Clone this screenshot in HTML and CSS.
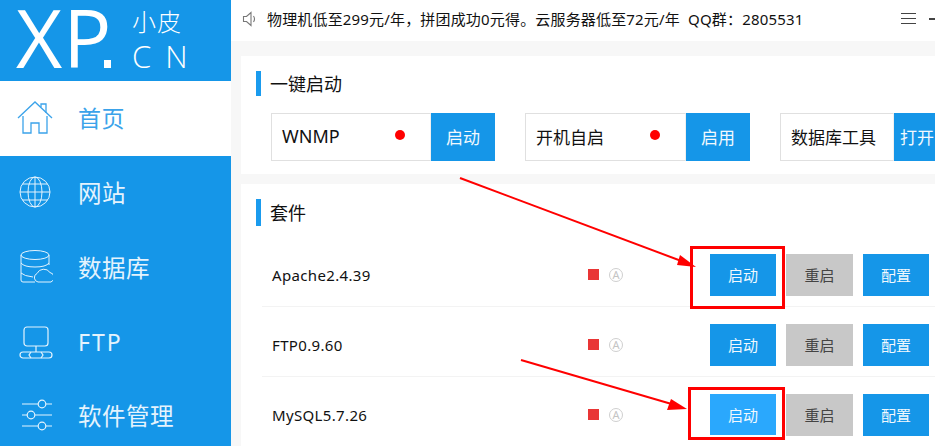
FILE: index.html
```html
<!DOCTYPE html>
<html lang="zh-CN">
<head>
<meta charset="utf-8">
<title>小皮面板</title>
<link rel="stylesheet" href="styles.css">
</head>
<body>
<div class="app">
  <aside class="sidebar">
    <div class="logo">
      <span class="logo-xp">XP</span>
      <span class="logo-dot"></span>
      <span class="logo-side"><span class="logo-cn">小皮</span><span class="logo-en">CN</span></span>
    </div>
    <nav class="nav">
      <a class="nav-item active">
        <svg class="nav-icon" viewBox="0 0 36 36" fill="none" stroke="currentColor" stroke-width="1.3"><path d="M1 19 18 3l17 16"/><path d="M24 8V5h5v9"/><path d="M6 17v17h8V24h8v10h8V17"/></svg>
        <span>首页</span>
      </a>
      <a class="nav-item">
        <svg class="nav-icon" viewBox="0 0 36 36" fill="none" stroke="currentColor" stroke-width="1"><circle cx="18" cy="18" r="15"/><ellipse cx="18" cy="18" rx="7" ry="15"/><path d="M18 3v30M3 18h30M5.500 10h25M5.500 26h25"/></svg>
        <span>网站</span>
      </a>
      <a class="nav-item">
        <svg class="nav-icon" viewBox="0 0 36 36" fill="none" stroke="currentColor" stroke-width="1"><ellipse cx="18" cy="6" rx="14" ry="4.500"/><path d="M4 6v25q0 2 2 2h12M32 6v10M4 14q3 4 14 4t14-4M4 24q3 3 12 4"/><path d="M21 33a4.500 4.500 0 0 1-1-8.500 7.500 7.500 0 0 1 13-1 5 5 0 0 1 1 9.500z"/></svg>
        <span>数据库</span>
      </a>
      <a class="nav-item">
        <svg class="nav-icon" viewBox="0 0 36 36" fill="none" stroke="currentColor" stroke-width="1.2"><rect x="7" y="3" width="24" height="19" rx="3"/><path d="M19 22v6M6 28h26a1.500 1.500 0 0 1 0 6H6a1.500 1.500 0 0 1 0-6z"/><path d="M14 28l-2 3 2 3M24 28l2 3-2 3"/></svg>
        <span class="nav-latin">FTP</span>
      </a>
      <a class="nav-item nav-item-last">
        <svg class="nav-icon" viewBox="0 0 36 36" fill="none" stroke="currentColor" stroke-width="1.2"><path d="M5 7h16M29 7h6M5 18h5M18 18h17M5 29h16M29 29h6"/><circle cx="25" cy="7" r="3.800"/><circle cx="14" cy="18" r="3.800"/><circle cx="25" cy="29" r="3.800"/></svg>
        <span>软件管理</span>
      </a>
    </nav>
  </aside>
  <main class="main">
    <header class="topbar">
      <svg class="speaker" viewBox="0 0 16 16" fill="none" stroke="#777" stroke-width="1.100"><path d="M1.500 5.500h3L9 1.500v13l-4.500-4h-3z"/><path d="M11.500 5q2 3 0 6"/></svg>
      <span class="notice">物理机低至299元/年，拼团成功0元得。云服务器低至72元/年&nbsp;&nbsp;QQ群：2805531</span>
      <span class="menu-icon"></span>
      <span class="min-icon"></span>
    </header>
    <section class="card card-quick">
      <h2 class="title">一键启动</h2>
      <div class="quick">
        <div class="quick-group">
          <div class="quick-box quick-box-a"><span class="quick-label quick-latin">WNMP</span><span class="dot"></span></div>
          <button class="quick-btn">启动</button>
        </div>
        <div class="quick-group">
          <div class="quick-box quick-box-c"><span class="quick-label">开机自启</span><span class="dot"></span></div>
          <button class="quick-btn">启用</button>
        </div>
        <div class="quick-group">
          <div class="quick-box quick-box-b"><span class="quick-label">数据库工具</span></div>
          <button class="quick-btn quick-btn-clipped">打开</button>
        </div>
      </div>
    </section>
    <section class="card card-suite">
      <h2 class="title title-suite">套件</h2>
      <div class="row">
        <span class="row-name">Apache2.4.39</span>
        <span class="stop"></span><span class="auto">A</span>
        <div class="actions"><button class="btn">启动</button><button class="btn btn-gray">重启</button><button class="btn">配置</button></div>
      </div>
      <div class="row">
        <span class="row-name">FTP0.9.60</span>
        <span class="stop"></span><span class="auto">A</span>
        <div class="actions"><button class="btn">启动</button><button class="btn btn-gray">重启</button><button class="btn">配置</button></div>
      </div>
      <div class="row">
        <span class="row-name">MySQL5.7.26</span>
        <span class="stop"></span><span class="auto">A</span>
        <div class="actions"><button class="btn btn-hover">启动</button><button class="btn btn-gray">重启</button><button class="btn">配置</button></div>
      </div>
    </section>
  </main>
  <svg class="marks" viewBox="0 0 935 446" fill="none">
    <path d="M460 178 684 262" stroke="#f00" stroke-width="2"/>
    <path d="M696 267 680 255 677 265z" fill="#f00"/>
    <rect x="691.500" y="247.500" width="92" height="60" stroke="#f00" stroke-width="3"/>
    <path d="M521 360 675 405" stroke="#f00" stroke-width="2"/>
    <path d="M687 409 671 399 667 410z" fill="#f00"/>
    <rect x="689.500" y="388.500" width="94" height="50" stroke="#f00" stroke-width="3"/>
  </svg>
</div>
</body>
</html>
```
FILE: styles.css
```css
* { box-sizing: border-box; }
html, body { margin: 0; height: 100%; overflow: hidden; }
body { font-family: "Noto Sans", "Noto Sans CJK SC", sans-serif; color: #111; background: #f7f7f7; }
.app { position: relative; display: flex; width: 935px; height: 446px; overflow: hidden; }

.sidebar { flex: none; width: 231px; height: 100%; background: #1596e8; color: #fff; }
.logo { display: flex; align-items: flex-start; height: 81px; padding-left: 16px; }
.logo-xp { width: 96px; margin-top: -4px; font-family: "Open Sans", sans-serif; font-weight: 400; font-size: 80px; line-height: 81px; letter-spacing: 1px; color: #fff; }
.logo-dot { flex: none; width: 7px; height: 8px; margin: 60px 0 0 -8px; background: #fff; }
.logo-side { display: flex; flex-direction: column; margin-left: 21px; padding-top: 6px; font-weight: 300; }
.logo-cn { font-size: 24px; line-height: 32px; letter-spacing: 1px; }
.logo-en { font-family: "Open Sans", sans-serif; font-size: 31px; line-height: 36px; letter-spacing: 14px; font-weight: 300; }

.nav-item { display: flex; align-items: center; height: 75px; padding: 0 0 3px 17px; color: #e4f3fd; font-size: 23.5px; letter-spacing: .5px; }
.nav-item.active { background: #fff; color: #3ba3ea; font-size: 23px; }
.nav-item-last { height: 68px; padding-bottom: 0; }
.nav-icon { flex: none; width: 36px; height: 36px; margin-right: 25px; }
.nav-latin { font-size: 23px; letter-spacing: 2px; }

.main { flex: none; width: 704px; height: 100%; overflow: hidden; }
.topbar { display: flex; align-items: center; height: 41px; padding: 0 0 4px 11px; background: #fff; }
.speaker { flex: none; width: 16px; height: 16px; margin-right: 9px; }
.notice { font-size: 15px; letter-spacing: .17px; white-space: nowrap; }
.menu-icon { flex: none; width: 15px; height: 11px; margin-left: auto; margin-right: 13px; border-top: 1px solid #444; border-bottom: 1px solid #444; position: relative; }
.menu-icon::after { content: ""; position: absolute; left: 0; right: 0; top: 4px; height: 1px; background: #444; }
.min-icon { flex: none; width: 6px; height: 2px; background: #444; }

.card { margin: 15px 0 0 10px; background: #fff; width: 694px; }
.card-quick { height: 118px; padding: 15px 0 0 15px; }
.card-suite { margin-top: 10px; height: 300px; padding: 15px 0 0 15px; }
.title { margin: 0; height: 25px; padding-left: 9px; border-left: 5px solid #1a9bee; font-size: 18px; font-weight: 400; line-height: 27px; }
.title-suite { height: 27px; line-height: 29px; }

.quick { display: flex; gap: 30px; margin: 17px 0 0 15px; width: 700px; }
.quick-group { display: flex; flex: none; height: 48px; }
.quick-box { display: flex; align-items: center; justify-content: space-between; height: 48px; padding: 0 25px 2px 10px; border: 1px solid #e0e0e0; border-right-color: #f0f0f0; }
.quick-box-a { width: 160px; }
.quick-box-c { width: 161px; }
.quick-box-b { width: 114px; }
.quick-label { font-size: 17px; white-space: nowrap; }
.quick-latin { font-size: 18px; }
.dot { width: 10px; height: 10px; border-radius: 50%; background: #f00; margin-top: -2px; }
.quick-btn { width: 64px; height: 48px; margin: 0; padding: 0 0 2px; border: 0; background: #1596e8; color: #f2f9fe; font: 17px "Noto Sans", "Noto Sans CJK SC", sans-serif; }
.quick-btn-clipped { text-align: left; padding-left: 6px; }

.row { display: flex; align-items: center; height: 70px; margin-left: 6px; padding: 6px 6px 0 10px; border-bottom: 1px solid #f3f3f3; }
.row:first-of-type { margin-top: 11px; }
.row-name { width: 316px; font-size: 15px; letter-spacing: .35px; }
.stop { flex: none; width: 11px; height: 11px; background: #e93535; }
.auto { flex: none; display: flex; align-items: center; justify-content: center; width: 14px; height: 14px; margin-left: 10px; border: 1px solid #cfcfcf; border-radius: 50%; color: #c4c4c4; font-size: 11px; line-height: 1; }
.actions { display: flex; gap: 10px; margin-left: auto; }
.btn { width: 66px; height: 42px; margin: 0; padding: 0; border: 0; background: #1596e8; color: #f2f9fe; font: 15px "Noto Sans", "Noto Sans CJK SC", sans-serif; }
.btn-gray { width: 67px; background: #c8c8c8; color: #444; }
.btn-hover { height: 41px; background: #2aa8fd; }

.marks { position: absolute; left: 0; top: 0; width: 935px; height: 446px; pointer-events: none; }
```
